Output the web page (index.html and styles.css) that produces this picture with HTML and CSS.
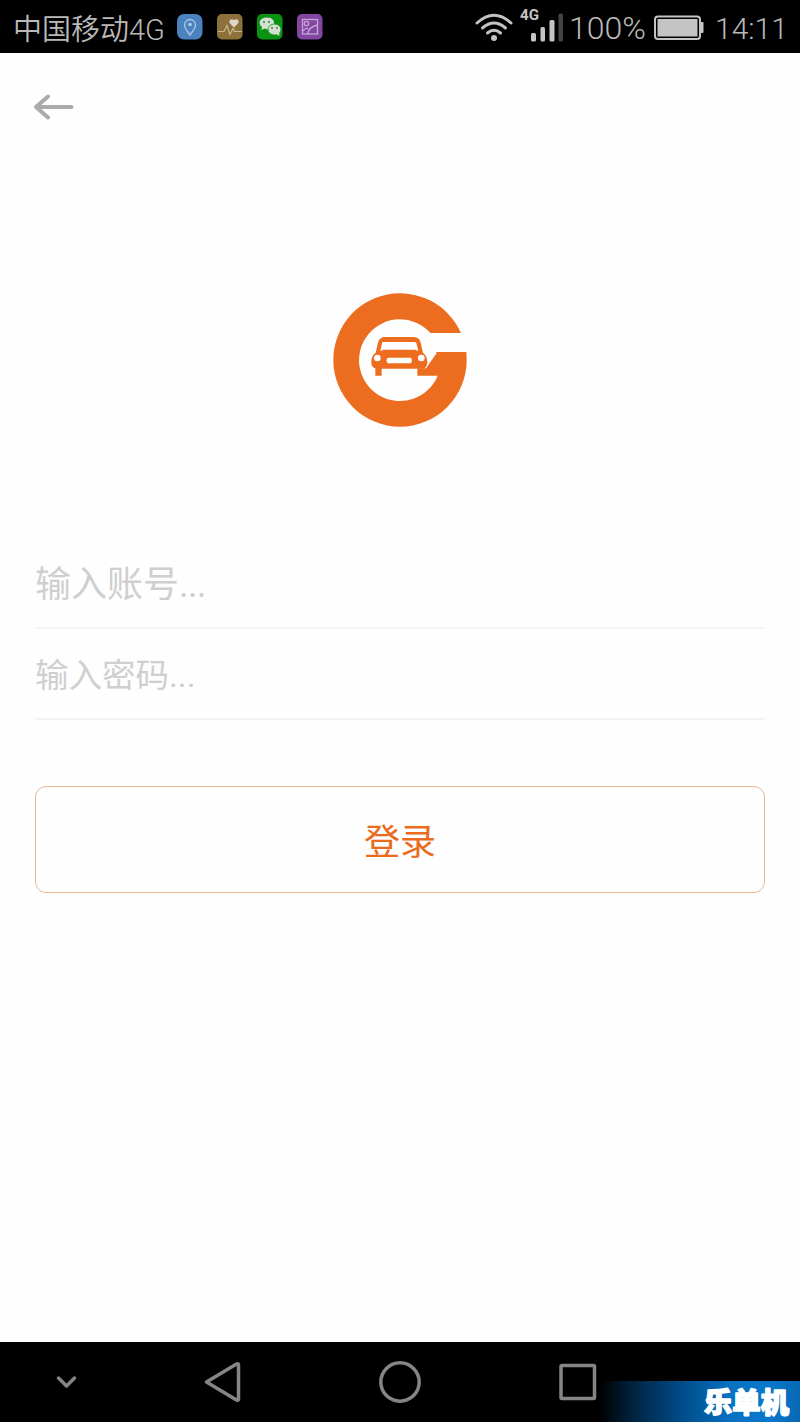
FILE: index.html
```html
<!DOCTYPE html>
<html lang="zh-CN">
<head>
<meta charset="utf-8">
<title>登录</title>
<link rel="stylesheet" href="styles.css">
</head>
<body>
<div class="screen">
  <header class="status">
    <span class="carrier">中国移动4G</span>
    <div class="apps">
      <svg class="app" viewBox="0 0 26 26"><rect width="25.500" height="25.500" rx="7" fill="#4c83bf"/><path d="M13 21C10 16.500 7.500 14 7.500 11a5.500 5.500 0 0 1 11 0c0 3-2.500 5.500-5.500 10z" fill="none" stroke="#a9c8e8" stroke-width="1.300"/><circle cx="13" cy="10.500" r="1.800" fill="#b5d0ea"/></svg>
      <svg class="app" viewBox="0 0 26 26"><rect width="25.500" height="25.500" rx="5" fill="#8c713b"/><path d="M17 13.500l-4-4c-2-2.500 1-6 4-3.500 3-2.500 6 1 4 3.500z" fill="#ddd5cb"/><path d="M1 17.500h6l3-6 3 9 3-6 1.500 3H25" fill="none" stroke="#c9b88f" stroke-width="1.200"/></svg>
      <svg class="app" viewBox="0 0 26 26"><rect width="25.500" height="25.500" rx="5" fill="#089412"/><path d="M4.500 16l.5-3C0 9 3.500 3.500 9.500 3.500S18 7 17 11s-5 5.500-9.500 3.500z" fill="#d3dfd1"/><ellipse cx="17.500" cy="15.500" rx="6.500" ry="5.500" fill="#d3dfd1" stroke="#089412" stroke-width=".8"/><path d="M19 20l3.500 2-.5-4z" fill="#d3dfd1"/><g fill="#347f35"><circle cx="7" cy="8" r="1"/><circle cx="12" cy="8" r="1"/><circle cx="15" cy="14" r=".9"/><circle cx="20" cy="14" r=".9"/></g></svg>
      <svg class="app" viewBox="0 0 26 26"><rect width="25.500" height="25.500" rx="5" fill="#8247a1"/><g fill="none" stroke="#c7a5d9" stroke-width="1.300"><rect x="5.500" y="5.500" width="15" height="14.500"/><circle cx="9.500" cy="9.500" r="2.200"/><path d="M6 17q2-3 5-2.500M10.500 20q1-7 10-9"/></g></svg>
    </div>
    <svg class="wifi" viewBox="0 0 38 30"><g fill="none" stroke="#c4c4c4" stroke-width="3" stroke-linecap="round"><path d="M2 11q17-15.500 34 0"/><path d="M7.500 16q11.500-10 23 0"/><path d="M12.500 21q6.500-5.500 13 0"/></g><circle cx="19" cy="26" r="3" fill="#c4c4c4"/></svg>
    <svg class="signal" viewBox="0 0 44 36"><text class="net" x="0" y="14" textLength="19" lengthAdjust="spacingAndGlyphs">4G</text><g fill="#c4c4c4"><rect x="11" y="27" width="5" height="8.500" rx="1.500"/><rect x="20.500" y="21" width="4.500" height="14.500" rx="1.500"/><rect x="29.500" y="14" width="5" height="21.500" rx="1.500"/><rect x="38.500" y="7.500" width="4.500" height="28" rx="1.500" fill="#444"/></g></svg>
    <span class="percent">100%</span>
    <svg class="battery" viewBox="0 0 50 26"><rect x="1" y="1.500" width="45" height="22.500" rx="3" fill="none" stroke="#c4c4c4" stroke-width="2"/><rect x="3.500" y="4" width="40" height="17.500" fill="#c4c4c4"/><path d="M47 7h1.500q1 0 1 1v9q0 1-1 1H47z" fill="#c4c4c4"/></svg>
    <span class="clock">14:11</span>
  </header>

  <main class="login">
    <svg class="back" viewBox="0 0 42 28"><path d="M15 3.500L3 14l12 10.500M4 14h34.500" fill="none" stroke="#ababab" stroke-width="4" stroke-linecap="round" stroke-linejoin="round"/></svg>
    <svg class="logo" viewBox="24 24 402 402">
      <g fill="#ec6d1f">
        <path d="M407.900 144A200 200 0 0 0 25 225A200 200 0 1 0 425 225L424 201H335L302 250 277 250V272H338A122.500 122.500 0 1 1 316 144Z"/>
        <path fill-rule="evenodd" d="M152 203L159 173Q162 156 182 156H264Q284 156 287 173L294 203Q305 212 307 228Q309 251 290 251H170V272H151V250Q138 248 139 229Q140 211 152 203ZM172 171L166 198 176 194H270L280 198 274 174Q273 171 268 171ZM188 218Q181 226 188 235H257Q265 226 257 218Z"/>
      </g>
      <circle cx="157" cy="219" r="10" fill="#fff"/><circle cx="289" cy="219" r="10" fill="#fff"/>
      <path d="M334 204L302 249" stroke="#fff" stroke-width="3"/>
    </svg>
    <div class="field account">输入账号<span class="dots">...</span></div>
    <div class="field password">输入密码...</div>
    <div class="submit">登录</div>
  </main>

  <footer class="nav">
    <svg class="keys" viewBox="0 0 800 80"><g fill="none" stroke="#858585" stroke-width="3.500" stroke-linejoin="round" stroke-linecap="round"><path d="M58.500 36l8 8 8-8"/><path d="M206.500 40L236.500 22q2-1 2 1v34q0 2-2 1z"/><circle cx="400" cy="40" r="19.200"/><rect x="561" y="23.500" width="33.500" height="33" rx="1"/></g></svg>
    <div class="brand"><svg class="brand-name" viewBox="0 0 92 36"><text x="3" y="27" textLength="85" lengthAdjust="spacingAndGlyphs">乐单机</text></svg></div>
  </footer>
</div>
</body>
</html>
```
FILE: styles.css
```css
body {
  margin: 0;
  font-family: Roboto, "Noto Sans CJK SC", sans-serif;
}

.screen {
  display: flex;
  flex-direction: column;
  width: 800px;
  height: 1422px;
  background: #fefefe;
}

.status {
  display: flex;
  align-items: center;
  box-sizing: border-box;
  height: 53px;
  padding: 0 0 0 13px;
  background: #000;
  color: #b9b9b9;
  white-space: nowrap;
}

.carrier {
  width: 164px;
  padding-top: 6px;
  font-size: 29px;
  font-weight: 350;
  line-height: 44px;
}

.apps {
  display: flex;
  gap: 14px;
}

.app {
  width: 26px;
  height: 26px;
}

.wifi {
  width: 38px;
  height: 30px;
  margin-left: 152px;
}

.signal {
  width: 44px;
  height: 36px;
  margin-bottom: 6px;
  margin-left: 7px;
}

.net {
  fill: #c4c4c4;
  font-size: 15px;
  font-weight: 700;
}

.percent {
  width: 84px;
  padding-top: 2px;
  margin-left: 5px;
  font-size: 32px;
  font-weight: 300;
}

.battery {
  width: 50px;
  height: 26px;
  margin-top: 2px;
  margin-left: 1px;
}

.clock {
  margin-left: 11px;
  padding-top: 3px;
  font-size: 30px;
  font-weight: 300;
}

.login {
  display: flex;
  flex: 1;
  flex-direction: column;
  padding: 40px 35px 0;
}

.back {
  width: 42px;
  height: 28px;
  margin-left: -2px;
}

.logo {
  align-self: center;
  width: 134px;
  height: 134px;
  margin-top: 172px;
}

.field {
  box-sizing: border-box;
  border-bottom: 2px solid #f4f4f4;
  color: #cfcfcf;
}

.account {
  height: 92px;
  margin-top: 110px;
  padding-top: 3px;
  font-size: 36px;
  line-height: 87px;
  padding-top: 5px;
}

.dots {
  letter-spacing: -0.5px;
}

.password {
  height: 91px;
  padding-top: 4px;
  font-size: 33.500px;
  line-height: 85px;
}

.submit {
  box-sizing: border-box;
  height: 107px;
  margin-top: 66px;
  padding-top: 5px;
  border: 1.500px solid #e9b995;
  border-radius: 11px;
  color: #eb6b1e;
  font-size: 36px;
  line-height: 102px;
  text-align: center;
}

.nav {
  position: relative;
  height: 80px;
  background: #000;
}

.keys {
  display: block;
  width: 800px;
  height: 80px;
}

.brand {
  position: absolute;
  right: 0;
  bottom: 0;
  display: flex;
  justify-content: flex-end;
  align-items: flex-end;
  width: 200px;
  height: 41px;
  background: linear-gradient(90deg, transparent 0, #00203b 15%, #004b87 40%, #0871c2 65%, #0878cc 85%, #0768b4 100%);
}

.brand-name {
  width: 92px;
  height: 36px;
  margin-right: 7px;
  fill: #fff;
  stroke: #fff;
  stroke-linejoin: round;
  stroke-width: 1.500px;
  font-size: 28px;
  font-weight: 900;
}
```
